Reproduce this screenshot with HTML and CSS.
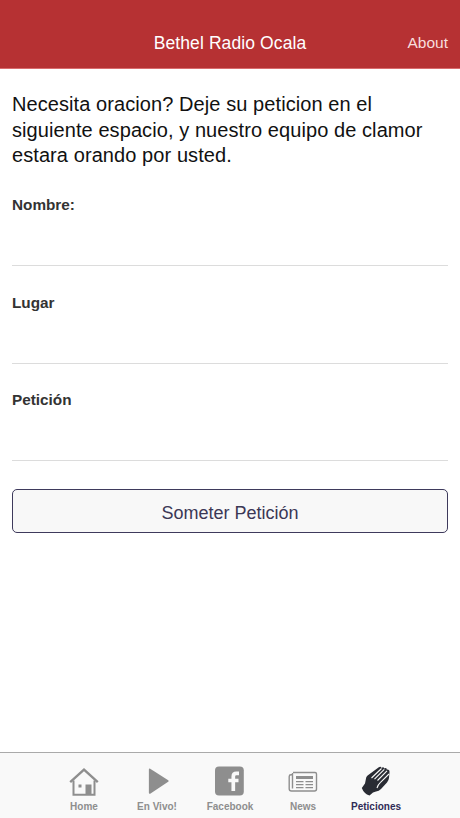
FILE: index.html
```html
<!DOCTYPE html>
<html lang="es">
<head>
    <meta charset="UTF-8">
    <meta name="viewport" content="width=device-width, initial-scale=1.0">
    <title>Bethel Radio Ocala</title>
    <link rel="stylesheet" href="styles.css">
</head>
<body>
    <header class="header">
        <h1 class="title">Bethel Radio Ocala</h1>
        <a class="about">About</a>
    </header>

    <main class="content">
        <p class="intro">Necesita oracion? Deje su peticion en el<br>siguiente espacio, y nuestro equipo de clamor<br>estara orando por usted.</p>
        <form class="form">
            <label class="label" for="nombre">Nombre:</label>
            <input class="input" type="text" id="nombre">
            <label class="label" for="lugar">Lugar</label>
            <input class="input" type="text" id="lugar">
            <label class="label" for="peticion">Petición</label>
            <input class="input" type="text" id="peticion">
            <button class="submit" type="button">Someter Petición</button>
        </form>
    </main>

    <nav class="tabs">
        <a class="tab">
            <svg class="icon" viewBox="0 0 30 30">
                <path d="M1.200 16.200 15 3.600 28.800 16.200" fill="none" stroke="currentColor" stroke-width="2.400"/>
                <path d="M4.500 14.500v14.300h21V14.500" fill="none" stroke="currentColor" stroke-width="2"/>
                <path d="M16.500 18.500h6v10.500h-6zM9.500 18.500h3v3H9.500z" fill="currentColor"/>
            </svg>
            <span>Home</span>
        </a>
        <a class="tab">
            <svg class="icon" viewBox="0 0 30 30">
                <path d="M8.200 2.800 26.200 14.200Q27.300 15 26.200 15.800L8.200 27.700Q6.900 28.300 6.900 26.800V3.600Q6.900 2 8.200 2.800z" fill="currentColor"/>
            </svg>
            <span>En Vivo!</span>
        </a>
        <a class="tab">
            <svg class="icon" viewBox="0 0 30 30">
                <rect x="0" y="0.400" width="28.800" height="29" rx="4" fill="currentColor"/>
                <path d="M18.300 25V10.500Q18.300 7.400 21.400 7.400H24M13.300 14.500H23.500" fill="none" stroke="#f9f9f9" stroke-width="3.700"/>
            </svg>
            <span>Facebook</span>
        </a>
        <a class="tab">
            <svg class="icon" viewBox="0 0 30 30">
                <g fill="none" stroke="currentColor" stroke-width="1.400">
                    <path d="M5 6.500h22q1.500 0 1.500 1.500v15q0 2-2 2H3.500q-2.300 0-2.300-2.300V10.500q0-1.700 1.800-1.700H4M4.500 22.500V7"/>
                    <path d="M8 15.600h7.500M17.500 15.600H25M8 18.600h7.500M17.500 18.600H25M8 21.600h7.500M17.500 21.600H25"/>
                </g>
                <path d="M8 10h17v3H8z" fill="currentColor"/>
            </svg>
            <span>News</span>
        </a>
        <a class="tab active">
            <svg class="icon" viewBox="0 0 30 30">
                <path d="M.8 22 4 17.500 5.200 11.500Q5.600 10.300 6.600 9.500L17.800 1.200Q20 0 20.500 2 22.500.5 23.300 2.500 25.500 1.300 25.800 3.500 28.800 3.200 28.500 6L28 12Q27.700 14.500 26 16.500L20 23Q18 25 15 25.500L12 26.500 8.500 29.500Q3 27.800.8 22z" fill="#292b33"/>
                <path d="M10.500 12 20.500 2.500M13.500 13.200 23.300 3.300M16.500 14.500 26 4.800M16 22Q17 18.500 19.500 16.300L28 8" fill="none" stroke="#f9f9f9" stroke-width="1.100"/>
            </svg>
            <span>Peticiones</span>
        </a>
    </nav>
</body>
</html>
```

FILE: styles.css
```css
* {
    box-sizing: border-box;
}

body {
    margin: 0;
    height: 818px;
    display: flex;
    flex-direction: column;
    background-color: #fff;
    font-family: "Liberation Sans", Arial, sans-serif;
}

.header {
    height: 69px;
    padding: 18px 12px 0;
    display: grid;
    grid-template-columns: 1fr auto 1fr;
    align-items: center;
    background-color: #b63133;
    border-bottom: 1px solid #d96b6d;
    color: #fff;
}

.title {
    grid-column: 2;
    margin: 0;
    font-size: 17.5px;
    font-weight: normal;
    letter-spacing: 0.1px;
}

.about {
    justify-self: end;
    font-size: 15.5px;
    color: #f8dede;
}

.content {
    flex: 1;
    padding: 23px 12px 0;
}

.intro {
    margin: 0;
    font-size: 20px;
    line-height: 25.7px;
    letter-spacing: 0.08px;
    white-space: nowrap;
    color: #111;
}

.form {
    display: flex;
    flex-direction: column;
    padding-top: 26px;
}

.label {
    font-size: 15.3px;
    font-weight: bold;
    line-height: 20px;
    color: #333;
}

.input {
    height: 51px;
    margin: 0 0 26.7px;
    padding: 0;
    border: 0;
    border-bottom: 1px solid #dcdcdc;
    background: none;
    font-size: 16px;
}

.submit {
    height: 44px;
    margin-top: 1px;
    padding: 4px 0 0;
    border: 1px solid #3e3a5c;
    border-radius: 5px;
    background-color: #f8f8f8;
    color: #3b3755;
    font-family: inherit;
    font-size: 18px;
}

.tabs {
    height: 66px;
    padding-top: 13px;
    display: flex;
    justify-content: center;
    background-color: #f9f9f9;
    border-top: 1px solid #aaa;
}

.tab {
    width: 73px;
    display: flex;
    flex-direction: column;
    align-items: center;
    gap: 5px;
    color: #8e8e8e;
    font-size: 10px;
    font-weight: bold;
    line-height: 12px;
}

.icon {
    width: 30px;
    height: 30px;
}

.active {
    color: #302c57;
}
```
